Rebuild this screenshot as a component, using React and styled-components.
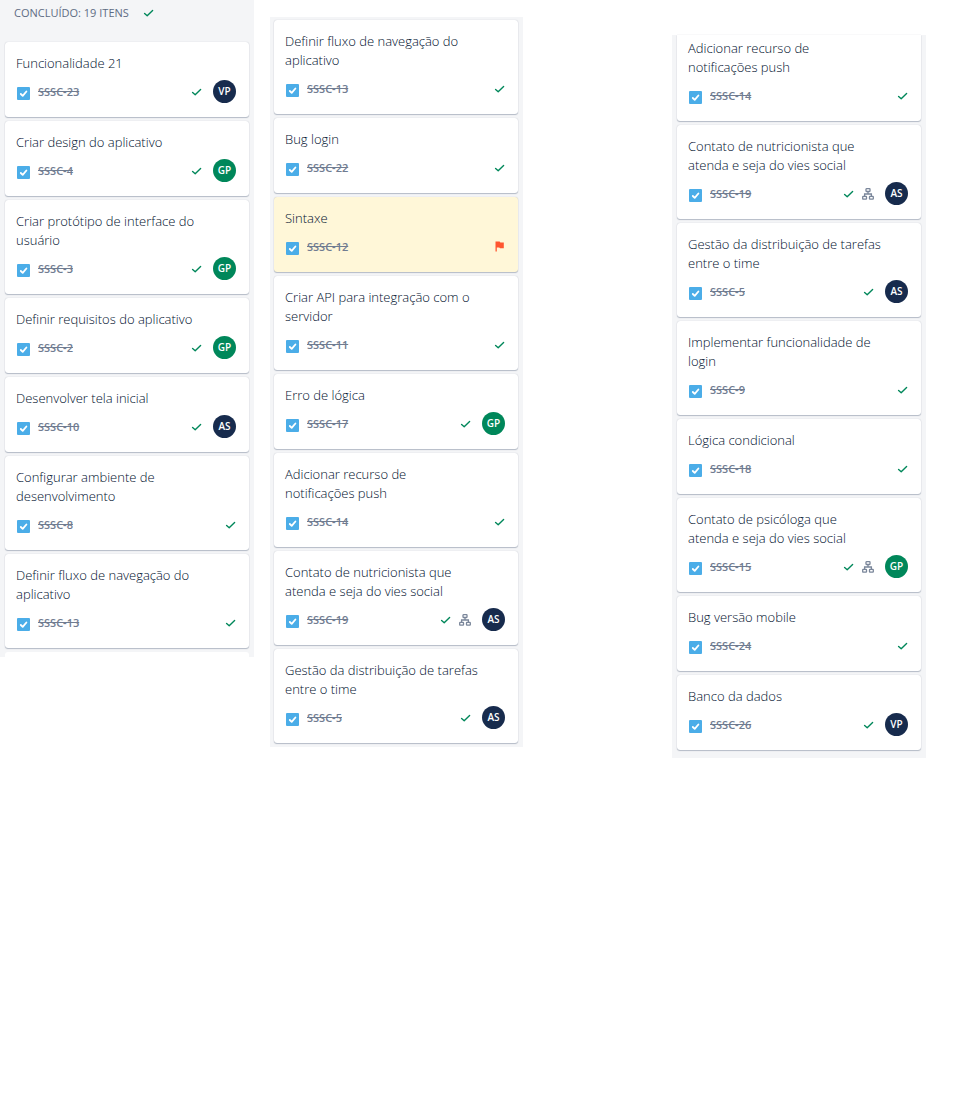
import React from "react";
import styled, { createGlobalStyle } from "styled-components";

const GlobalStyle = createGlobalStyle`
  *, *::before, *::after { box-sizing: border-box; }
  body {
    margin: 0;
    background: #ffffff;
    color: #00102e;
    font-family: "Open Sans", "Noto Sans", sans-serif;
    font-size: 13px;
    line-height: 19px;
  }
`;

const Board = styled.main`
  display: grid;
  grid-template-columns: 254fr 16fr 253fr 149fr 254fr 34fr;
  align-items: start;
`;

const Column = styled.section`
  grid-column: ${(p) => p.$track};
  margin-top: ${(p) => p.$top || 0}px;
  padding: ${(p) => p.$padding};
  background: #f4f5f7;
`;

const ColumnHeader = styled.header`
  display: flex;
  align-items: center;
  gap: 14px;
  height: 42px;
  padding: 0 9px 18px;
`;

const ColumnTitle = styled.h2`
  margin: 0;
  color: #5e6c84;
  font-size: 11px;
  font-weight: 400;
  text-transform: uppercase;
`;

const CardList = styled.ul`
  display: flex;
  flex-direction: column;
  gap: 4px;
  margin: 0;
  padding: 0;
  list-style: none;
`;

const Card = styled.li`
  padding: ${(p) => (p.$cutTop ? 4 : 12)}px 13px 14px 11px;
  border-radius: ${(p) => (p.$cutTop ? "0 0 3px 3px" : "3px")};
  background: ${(p) => (p.$flagged ? "#fff7d8" : "#ffffff")};
  box-shadow: 0 1px 1px rgba(9, 30, 66, 0.25), 0 0 1px rgba(9, 30, 66, 0.25);
`;

const CardSliver = styled.li`
  height: ${(p) => p.$height}px;
  border-radius: 3px 3px 0 0;
  background: #ffffff;
`;

const CardTitle = styled.h3`
  margin: 0 0 7px;
  font-size: 13px;
  font-weight: 300;
  white-space: pre-line;
`;

const CardFooter = styled.div`
  display: flex;
  align-items: center;
  gap: 8px;
  height: 23px;
`;

const TickBox = styled.span`
  display: grid;
  width: 14px;
  height: 13px;
  margin-top: 3px;
  padding-left: 1px;

  & > * { grid-area: 1 / 1; }
`;

const TickInput = styled.input`
  appearance: none;
  width: 13px;
  height: 13px;
  margin: 0;
  border-radius: 1px;
  background: #4bade8;
`;

const TickMark = styled.svg`
  width: 13px;
  height: 13px;
  pointer-events: none;
`;

const IssueKey = styled.a`
  flex: 1;
  color: #707c91;
  font-size: 11px;
  font-weight: 600;
  text-decoration: line-through;
`;

const Glyph = styled.svg`
  flex: none;
  width: 11px;
  height: 11px;
`;

const TreeGlyph = styled(Glyph)`
  width: 12px;
  height: 12px;
`;

const Avatar = styled.span`
  display: grid;
  place-items: center;
  width: 23px;
  height: 23px;
  margin-left: 3px;
  border-radius: 50%;
  background: ${(p) => (p.$name === "GP" ? "#00875a" : "#172b4d")};
  color: #ffffff;
  font-size: 10px;
  font-weight: 600;
`;

const DoneIcon = () => (
  <Glyph viewBox="0 0 11 11" role="img" aria-label="Concluído">
    <path d="M1.6 6.5 L4.2 8.7 L9.6 3.4" fill="none" stroke="#00875a" strokeWidth="1.4" strokeLinecap="round" strokeLinejoin="round" />
  </Glyph>
);

const TreeIcon = () => (
  <TreeGlyph viewBox="0 0 12 12" role="img" aria-label="Subtarefas">
    <g fill="none" stroke="#7a869a" strokeWidth="1.3">
      <rect x="4" y="0.7" width="4" height="2.8" rx="0.5" />
      <rect x="0.7" y="8.4" width="3.8" height="2.8" rx="0.5" />
      <rect x="7.5" y="8.4" width="3.8" height="2.8" rx="0.5" />
      <path d="M6 3.5V6M2.6 8.4V6H9.4V8.4" />
    </g>
  </TreeGlyph>
);

const FlagIcon = () => (
  <Glyph viewBox="0 0 11 11" role="img" aria-label="Sinalizado">
    <path d="M1.5 0.6 H5.6 L6.4 1.4 H9.8 V7.2 H6 L5.2 6.4 H2.8 V10.6 H1.5 Z" fill="#ff5630" />
  </Glyph>
);

const Issue = ({ title, id, who, tree, flagged, cutTop, column }) => {
  const boxId = `${column}-${id}`;
  return (
    <Card $flagged={flagged} $cutTop={cutTop}>
      <CardTitle>{title}</CardTitle>
      <CardFooter>
        <TickBox>
          <TickInput type="checkbox" id={boxId} defaultChecked aria-label={`Tarefa ${id}`} />
          <TickMark viewBox="0 0 13 13" aria-hidden="true">
            <path d="M3.8 7 L5.7 8.9 L9.4 4.5" fill="none" stroke="#fff" strokeWidth="1.8" strokeLinecap="round" strokeLinejoin="round" />
          </TickMark>
        </TickBox>
        <IssueKey href={`#${boxId}`}>{id}</IssueKey>
        {flagged ? <FlagIcon /> : <DoneIcon />}
        {tree && <TreeIcon />}
        {who && <Avatar $name={who}>{who}</Avatar>}
      </CardFooter>
    </Card>
  );
};

const first = [
  { title: "Funcionalidade 21", id: "SSSC-23", who: "VP" },
  { title: "Criar design do aplicativo", id: "SSSC-4", who: "GP" },
  { title: "Criar protótipo de interface do\nusuário", id: "SSSC-3", who: "GP" },
  { title: "Definir requisitos do aplicativo", id: "SSSC-2", who: "GP" },
  { title: "Desenvolver tela inicial", id: "SSSC-10", who: "AS" },
  { title: "Configurar ambiente de\ndesenvolvimento", id: "SSSC-8" },
  { title: "Definir fluxo de navegação do\naplicativo", id: "SSSC-13" },
];

const second = [
  { title: "Definir fluxo de navegação do\naplicativo", id: "SSSC-13" },
  { title: "Bug login", id: "SSSC-22" },
  { title: "Sintaxe", id: "SSSC-12", flagged: true },
  { title: "Criar API para integração com o\nservidor", id: "SSSC-11" },
  { title: "Erro de lógica", id: "SSSC-17", who: "GP" },
  { title: "Adicionar recurso de\nnotificações push", id: "SSSC-14" },
  { title: "Contato de nutricionista que\natenda e seja do vies social", id: "SSSC-19", who: "AS", tree: true },
  { title: "Gestão da distribuição de tarefas\nentre o time", id: "SSSC-5", who: "AS" },
];

const third = [
  { title: "Adicionar recurso de\nnotificações push", id: "SSSC-14", cutTop: true },
  { title: "Contato de nutricionista que\natenda e seja do vies social", id: "SSSC-19", who: "AS", tree: true },
  { title: "Gestão da distribuição de tarefas\nentre o time", id: "SSSC-5", who: "AS" },
  { title: "Implementar funcionalidade de\nlogin", id: "SSSC-9" },
  { title: "Lógica condicional", id: "SSSC-18" },
  { title: "Contato de psicóloga que\natenda e seja do vies social", id: "SSSC-15", who: "GP", tree: true },
  { title: "Bug versão mobile", id: "SSSC-24" },
  { title: "Banco da dados", id: "SSSC-26", who: "VP" },
];

const issues = (list, column) => list.map((item) => <Issue key={item.id} column={column} {...item} />);

export default function App() {
  return (
    <>
      <GlobalStyle />
      <Board>
        <Column $track={1} $padding="0 5px">
          <ColumnHeader>
            <ColumnTitle>Concluído: 19 itens</ColumnTitle>
            <DoneIcon />
          </ColumnHeader>
          <CardList>
            {issues(first, "a")}
            <CardSliver $height={5} aria-hidden="true" />
          </CardList>
        </Column>
        <Column $track={3} $top={17} $padding="3px 5px 4px 4px">
          <CardList>{issues(second, "b")}</CardList>
        </Column>
        <Column $track={5} $top={35} $padding="0 5px 8px">
          <CardList>{issues(third, "c")}</CardList>
        </Column>
      </Board>
    </>
  );
}
